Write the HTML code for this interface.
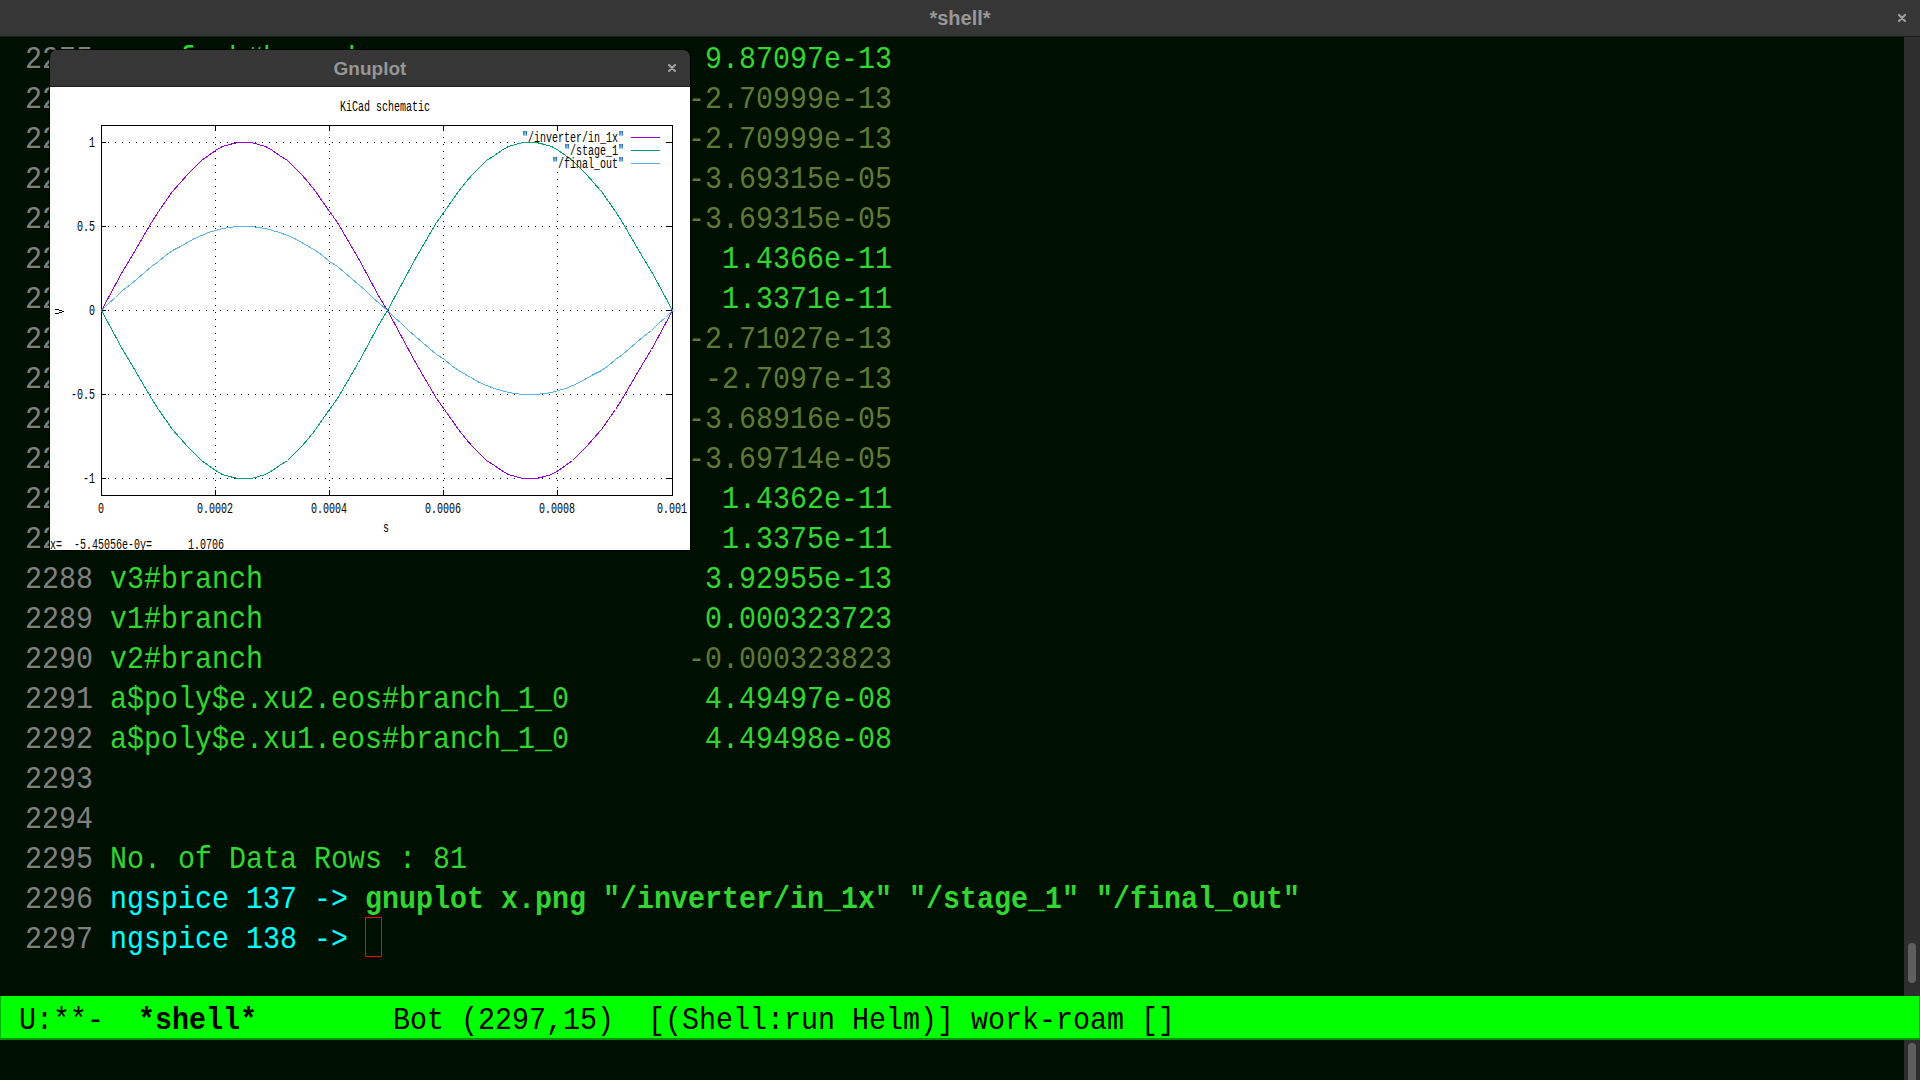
<!DOCTYPE html>
<html><head><meta charset="utf-8"><style>
html,body{margin:0;padding:0;}
body{width:1920px;height:1080px;overflow:hidden;background:#001000;position:relative;font-family:"Liberation Mono",monospace;}
.ln{position:absolute;left:25px;height:40px;line-height:40px;font-size:28.33px;white-space:pre;transform-origin:0 27px;transform:translateY(1px) scaleY(1.1);}
.ln b{font-weight:bold;}
#titlebar{position:absolute;left:0;top:0;width:1920px;height:37px;background:#363636;border-bottom:1px solid #1c1c1c;box-sizing:border-box;}
#titlebar .t{position:absolute;left:0;width:1920px;top:0;height:36px;line-height:36px;text-align:center;font-family:"Liberation Sans",sans-serif;font-weight:bold;font-size:20px;color:#979797;}
.x{position:absolute;}
#sb{position:absolute;left:1904px;top:37px;width:16px;height:1043px;background:#2e2e2e;}
.thumb{position:absolute;left:1908px;width:8px;border-radius:4px;background:#5f5f5f;}
#ml{position:absolute;left:0;top:996px;width:1920px;height:44px;background:#00ff00;border-left:1px solid #00b000;border-right:1px solid #009000;border-bottom:2px solid #009000;box-sizing:border-box;}
#ml .mt{position:absolute;left:18px;top:5px;height:42px;line-height:42px;font-size:28.33px;white-space:pre;color:#000;transform-origin:0 28px;transform:translateY(0px) scaleY(1.1);}
#gp{position:absolute;left:50px;top:50px;width:640px;height:500px;border-radius:7px 7px 0 0;box-shadow:0 0 0 1px rgba(0,0,0,0.85);}
#gptb{position:absolute;left:50px;top:50px;width:640px;height:37px;background:#363636;border-radius:7px 7px 0 0;border-bottom:1px solid #1c1c1c;box-sizing:border-box;}
#gptb .t{position:absolute;left:0;width:640px;top:1px;height:36px;line-height:36px;text-align:center;font-family:"Liberation Sans",sans-serif;font-weight:bold;font-size:19px;color:#969696;}
.gt{position:absolute;font-family:"Liberation Mono",monospace;font-size:10px;line-height:11px;height:11px;white-space:pre;color:#000;transform-origin:0 9px;transform:translateY(3px) scaleY(1.45);}
#cursor{position:absolute;left:365px;top:917px;width:17px;height:40px;border:1px solid #ff0000;box-sizing:border-box;}
</style></head><body>
<div class="ln" style="top:40px"><span style="color:#808080">2275</span> <span style="color:#33d433">mos.fueb#branch</span></div><div class="ln" style="top:40px;left:705px;color:#33d433">9.87097e-13</div><div class="ln" style="top:80px"><span style="color:#808080">2276</span> </div><div class="ln" style="top:80px;left:688px;color:#5e7936">-2.70999e-13</div><div class="ln" style="top:120px"><span style="color:#808080">2277</span> </div><div class="ln" style="top:120px;left:688px;color:#5e7936">-2.70999e-13</div><div class="ln" style="top:160px"><span style="color:#808080">2278</span> </div><div class="ln" style="top:160px;left:688px;color:#5e7936">-3.69315e-05</div><div class="ln" style="top:200px"><span style="color:#808080">2279</span> </div><div class="ln" style="top:200px;left:688px;color:#5e7936">-3.69315e-05</div><div class="ln" style="top:240px"><span style="color:#808080">2280</span> </div><div class="ln" style="top:240px;left:722px;color:#33d433">1.4366e-11</div><div class="ln" style="top:280px"><span style="color:#808080">2281</span> </div><div class="ln" style="top:280px;left:722px;color:#33d433">1.3371e-11</div><div class="ln" style="top:320px"><span style="color:#808080">2282</span> </div><div class="ln" style="top:320px;left:688px;color:#5e7936">-2.71027e-13</div><div class="ln" style="top:360px"><span style="color:#808080">2283</span> </div><div class="ln" style="top:360px;left:705px;color:#5e7936">-2.7097e-13</div><div class="ln" style="top:400px"><span style="color:#808080">2284</span> </div><div class="ln" style="top:400px;left:688px;color:#5e7936">-3.68916e-05</div><div class="ln" style="top:440px"><span style="color:#808080">2285</span> </div><div class="ln" style="top:440px;left:688px;color:#5e7936">-3.69714e-05</div><div class="ln" style="top:480px"><span style="color:#808080">2286</span> </div><div class="ln" style="top:480px;left:722px;color:#33d433">1.4362e-11</div><div class="ln" style="top:520px"><span style="color:#808080">2287</span> </div><div class="ln" style="top:520px;left:722px;color:#33d433">1.3375e-11</div><div class="ln" style="top:560px"><span style="color:#808080">2288</span> <span style="color:#33d433">v3#branch</span></div><div class="ln" style="top:560px;left:705px;color:#33d433">3.92955e-13</div><div class="ln" style="top:600px"><span style="color:#808080">2289</span> <span style="color:#33d433">v1#branch</span></div><div class="ln" style="top:600px;left:705px;color:#33d433">0.000323723</div><div class="ln" style="top:640px"><span style="color:#808080">2290</span> <span style="color:#33d433">v2#branch</span></div><div class="ln" style="top:640px;left:688px;color:#5e7936">-0.000323823</div><div class="ln" style="top:680px"><span style="color:#808080">2291</span> <span style="color:#33d433">a$poly$e.xu2.eos#branch_1_0</span></div><div class="ln" style="top:680px;left:705px;color:#33d433">4.49497e-08</div><div class="ln" style="top:720px"><span style="color:#808080">2292</span> <span style="color:#33d433">a$poly$e.xu1.eos#branch_1_0</span></div><div class="ln" style="top:720px;left:705px;color:#33d433">4.49498e-08</div><div class="ln" style="top:760px"><span style="color:#808080">2293</span> </div><div class="ln" style="top:800px"><span style="color:#808080">2294</span> </div><div class="ln" style="top:840px"><span style="color:#808080">2295</span> <span style="color:#33d433">No. of Data Rows : 81</span></div><div class="ln" style="top:880px"><span style="color:#808080">2296</span> <span style="color:#00ffff">ngspice 137 -&gt; </span><span style="color:#33d433"><b>gnuplot x.png &quot;/inverter/in_1x&quot; &quot;/stage_1&quot; &quot;/final_out&quot;</b></span></div><div class="ln" style="top:920px"><span style="color:#808080">2297</span> <span style="color:#00ffff">ngspice 138 -&gt; </span></div>
<div id="cursor"></div>
<div id="titlebar"><div class="t">*shell*</div>
<svg class="x" style="left:1896px;top:12px" width="12" height="12" viewBox="0 0 12 12"><path d="M3,3L9,9M9,3L3,9" stroke="#a0a0a0" stroke-width="2.2" stroke-linecap="round"/></svg>
</div>
<div id="sb"></div>
<div class="thumb" style="top:943px;height:40px"></div>
<div class="thumb" style="top:1043px;height:60px"></div>
<div id="ml"><div class="mt">U:**-  <b>*shell*</b>        Bot (2297,15)  [(Shell:run Helm)] work-roam []</div></div>
<div id="gp"></div>
<div id="gptb"><div class="t">Gnuplot</div>
<svg class="x" style="left:616px;top:12px" width="12" height="12" viewBox="0 0 12 12"><path d="M3,3L9,9M9,3L3,9" stroke="#a0a0a0" stroke-width="2.2" stroke-linecap="round"/></svg>
</div>
<svg width="640" height="463" viewBox="50 87 640 463" style="position:absolute;left:50px;top:87px" shape-rendering="crispEdges">
<rect x="50" y="87" width="640" height="463" fill="#fff"/>
<path d="M108,142h1v1h-1zM115,142h1v1h-1zM122,142h1v1h-1zM129,142h1v1h-1zM136,142h1v1h-1zM143,142h1v1h-1zM150,142h1v1h-1zM157,142h1v1h-1zM164,142h1v1h-1zM171,142h1v1h-1zM178,142h1v1h-1zM185,142h1v1h-1zM192,142h1v1h-1zM199,142h1v1h-1zM206,142h1v1h-1zM213,142h1v1h-1zM220,142h1v1h-1zM227,142h1v1h-1zM234,142h1v1h-1zM241,142h1v1h-1zM248,142h1v1h-1zM255,142h1v1h-1zM262,142h1v1h-1zM269,142h1v1h-1zM276,142h1v1h-1zM283,142h1v1h-1zM290,142h1v1h-1zM297,142h1v1h-1zM304,142h1v1h-1zM311,142h1v1h-1zM318,142h1v1h-1zM325,142h1v1h-1zM332,142h1v1h-1zM339,142h1v1h-1zM346,142h1v1h-1zM353,142h1v1h-1zM360,142h1v1h-1zM367,142h1v1h-1zM374,142h1v1h-1zM381,142h1v1h-1zM388,142h1v1h-1zM395,142h1v1h-1zM402,142h1v1h-1zM409,142h1v1h-1zM416,142h1v1h-1zM423,142h1v1h-1zM430,142h1v1h-1zM437,142h1v1h-1zM444,142h1v1h-1zM451,142h1v1h-1zM458,142h1v1h-1zM465,142h1v1h-1zM472,142h1v1h-1zM479,142h1v1h-1zM486,142h1v1h-1zM493,142h1v1h-1zM500,142h1v1h-1zM507,142h1v1h-1zM514,142h1v1h-1zM521,142h1v1h-1zM528,142h1v1h-1zM535,142h1v1h-1zM542,142h1v1h-1zM549,142h1v1h-1zM556,142h1v1h-1zM563,142h1v1h-1zM570,142h1v1h-1zM577,142h1v1h-1zM584,142h1v1h-1zM591,142h1v1h-1zM598,142h1v1h-1zM605,142h1v1h-1zM612,142h1v1h-1zM619,142h1v1h-1zM626,142h1v1h-1zM633,142h1v1h-1zM640,142h1v1h-1zM647,142h1v1h-1zM654,142h1v1h-1zM661,142h1v1h-1zM108,226h1v1h-1zM115,226h1v1h-1zM122,226h1v1h-1zM129,226h1v1h-1zM136,226h1v1h-1zM143,226h1v1h-1zM150,226h1v1h-1zM157,226h1v1h-1zM164,226h1v1h-1zM171,226h1v1h-1zM178,226h1v1h-1zM185,226h1v1h-1zM192,226h1v1h-1zM199,226h1v1h-1zM206,226h1v1h-1zM213,226h1v1h-1zM220,226h1v1h-1zM227,226h1v1h-1zM234,226h1v1h-1zM241,226h1v1h-1zM248,226h1v1h-1zM255,226h1v1h-1zM262,226h1v1h-1zM269,226h1v1h-1zM276,226h1v1h-1zM283,226h1v1h-1zM290,226h1v1h-1zM297,226h1v1h-1zM304,226h1v1h-1zM311,226h1v1h-1zM318,226h1v1h-1zM325,226h1v1h-1zM332,226h1v1h-1zM339,226h1v1h-1zM346,226h1v1h-1zM353,226h1v1h-1zM360,226h1v1h-1zM367,226h1v1h-1zM374,226h1v1h-1zM381,226h1v1h-1zM388,226h1v1h-1zM395,226h1v1h-1zM402,226h1v1h-1zM409,226h1v1h-1zM416,226h1v1h-1zM423,226h1v1h-1zM430,226h1v1h-1zM437,226h1v1h-1zM444,226h1v1h-1zM451,226h1v1h-1zM458,226h1v1h-1zM465,226h1v1h-1zM472,226h1v1h-1zM479,226h1v1h-1zM486,226h1v1h-1zM493,226h1v1h-1zM500,226h1v1h-1zM507,226h1v1h-1zM514,226h1v1h-1zM521,226h1v1h-1zM528,226h1v1h-1zM535,226h1v1h-1zM542,226h1v1h-1zM549,226h1v1h-1zM556,226h1v1h-1zM563,226h1v1h-1zM570,226h1v1h-1zM577,226h1v1h-1zM584,226h1v1h-1zM591,226h1v1h-1zM598,226h1v1h-1zM605,226h1v1h-1zM612,226h1v1h-1zM619,226h1v1h-1zM626,226h1v1h-1zM633,226h1v1h-1zM640,226h1v1h-1zM647,226h1v1h-1zM654,226h1v1h-1zM661,226h1v1h-1zM108,310h1v1h-1zM115,310h1v1h-1zM122,310h1v1h-1zM129,310h1v1h-1zM136,310h1v1h-1zM143,310h1v1h-1zM150,310h1v1h-1zM157,310h1v1h-1zM164,310h1v1h-1zM171,310h1v1h-1zM178,310h1v1h-1zM185,310h1v1h-1zM192,310h1v1h-1zM199,310h1v1h-1zM206,310h1v1h-1zM213,310h1v1h-1zM220,310h1v1h-1zM227,310h1v1h-1zM234,310h1v1h-1zM241,310h1v1h-1zM248,310h1v1h-1zM255,310h1v1h-1zM262,310h1v1h-1zM269,310h1v1h-1zM276,310h1v1h-1zM283,310h1v1h-1zM290,310h1v1h-1zM297,310h1v1h-1zM304,310h1v1h-1zM311,310h1v1h-1zM318,310h1v1h-1zM325,310h1v1h-1zM332,310h1v1h-1zM339,310h1v1h-1zM346,310h1v1h-1zM353,310h1v1h-1zM360,310h1v1h-1zM367,310h1v1h-1zM374,310h1v1h-1zM381,310h1v1h-1zM388,310h1v1h-1zM395,310h1v1h-1zM402,310h1v1h-1zM409,310h1v1h-1zM416,310h1v1h-1zM423,310h1v1h-1zM430,310h1v1h-1zM437,310h1v1h-1zM444,310h1v1h-1zM451,310h1v1h-1zM458,310h1v1h-1zM465,310h1v1h-1zM472,310h1v1h-1zM479,310h1v1h-1zM486,310h1v1h-1zM493,310h1v1h-1zM500,310h1v1h-1zM507,310h1v1h-1zM514,310h1v1h-1zM521,310h1v1h-1zM528,310h1v1h-1zM535,310h1v1h-1zM542,310h1v1h-1zM549,310h1v1h-1zM556,310h1v1h-1zM563,310h1v1h-1zM570,310h1v1h-1zM577,310h1v1h-1zM584,310h1v1h-1zM591,310h1v1h-1zM598,310h1v1h-1zM605,310h1v1h-1zM612,310h1v1h-1zM619,310h1v1h-1zM626,310h1v1h-1zM633,310h1v1h-1zM640,310h1v1h-1zM647,310h1v1h-1zM654,310h1v1h-1zM661,310h1v1h-1zM108,394h1v1h-1zM115,394h1v1h-1zM122,394h1v1h-1zM129,394h1v1h-1zM136,394h1v1h-1zM143,394h1v1h-1zM150,394h1v1h-1zM157,394h1v1h-1zM164,394h1v1h-1zM171,394h1v1h-1zM178,394h1v1h-1zM185,394h1v1h-1zM192,394h1v1h-1zM199,394h1v1h-1zM206,394h1v1h-1zM213,394h1v1h-1zM220,394h1v1h-1zM227,394h1v1h-1zM234,394h1v1h-1zM241,394h1v1h-1zM248,394h1v1h-1zM255,394h1v1h-1zM262,394h1v1h-1zM269,394h1v1h-1zM276,394h1v1h-1zM283,394h1v1h-1zM290,394h1v1h-1zM297,394h1v1h-1zM304,394h1v1h-1zM311,394h1v1h-1zM318,394h1v1h-1zM325,394h1v1h-1zM332,394h1v1h-1zM339,394h1v1h-1zM346,394h1v1h-1zM353,394h1v1h-1zM360,394h1v1h-1zM367,394h1v1h-1zM374,394h1v1h-1zM381,394h1v1h-1zM388,394h1v1h-1zM395,394h1v1h-1zM402,394h1v1h-1zM409,394h1v1h-1zM416,394h1v1h-1zM423,394h1v1h-1zM430,394h1v1h-1zM437,394h1v1h-1zM444,394h1v1h-1zM451,394h1v1h-1zM458,394h1v1h-1zM465,394h1v1h-1zM472,394h1v1h-1zM479,394h1v1h-1zM486,394h1v1h-1zM493,394h1v1h-1zM500,394h1v1h-1zM507,394h1v1h-1zM514,394h1v1h-1zM521,394h1v1h-1zM528,394h1v1h-1zM535,394h1v1h-1zM542,394h1v1h-1zM549,394h1v1h-1zM556,394h1v1h-1zM563,394h1v1h-1zM570,394h1v1h-1zM577,394h1v1h-1zM584,394h1v1h-1zM591,394h1v1h-1zM598,394h1v1h-1zM605,394h1v1h-1zM612,394h1v1h-1zM619,394h1v1h-1zM626,394h1v1h-1zM633,394h1v1h-1zM640,394h1v1h-1zM647,394h1v1h-1zM654,394h1v1h-1zM661,394h1v1h-1zM108,478h1v1h-1zM115,478h1v1h-1zM122,478h1v1h-1zM129,478h1v1h-1zM136,478h1v1h-1zM143,478h1v1h-1zM150,478h1v1h-1zM157,478h1v1h-1zM164,478h1v1h-1zM171,478h1v1h-1zM178,478h1v1h-1zM185,478h1v1h-1zM192,478h1v1h-1zM199,478h1v1h-1zM206,478h1v1h-1zM213,478h1v1h-1zM220,478h1v1h-1zM227,478h1v1h-1zM234,478h1v1h-1zM241,478h1v1h-1zM248,478h1v1h-1zM255,478h1v1h-1zM262,478h1v1h-1zM269,478h1v1h-1zM276,478h1v1h-1zM283,478h1v1h-1zM290,478h1v1h-1zM297,478h1v1h-1zM304,478h1v1h-1zM311,478h1v1h-1zM318,478h1v1h-1zM325,478h1v1h-1zM332,478h1v1h-1zM339,478h1v1h-1zM346,478h1v1h-1zM353,478h1v1h-1zM360,478h1v1h-1zM367,478h1v1h-1zM374,478h1v1h-1zM381,478h1v1h-1zM388,478h1v1h-1zM395,478h1v1h-1zM402,478h1v1h-1zM409,478h1v1h-1zM416,478h1v1h-1zM423,478h1v1h-1zM430,478h1v1h-1zM437,478h1v1h-1zM444,478h1v1h-1zM451,478h1v1h-1zM458,478h1v1h-1zM465,478h1v1h-1zM472,478h1v1h-1zM479,478h1v1h-1zM486,478h1v1h-1zM493,478h1v1h-1zM500,478h1v1h-1zM507,478h1v1h-1zM514,478h1v1h-1zM521,478h1v1h-1zM528,478h1v1h-1zM535,478h1v1h-1zM542,478h1v1h-1zM549,478h1v1h-1zM556,478h1v1h-1zM563,478h1v1h-1zM570,478h1v1h-1zM577,478h1v1h-1zM584,478h1v1h-1zM591,478h1v1h-1zM598,478h1v1h-1zM605,478h1v1h-1zM612,478h1v1h-1zM619,478h1v1h-1zM626,478h1v1h-1zM633,478h1v1h-1zM640,478h1v1h-1zM647,478h1v1h-1zM654,478h1v1h-1zM661,478h1v1h-1zM215,487h1v1h-1zM215,480h1v1h-1zM215,473h1v1h-1zM215,466h1v1h-1zM215,459h1v1h-1zM215,452h1v1h-1zM215,445h1v1h-1zM215,438h1v1h-1zM215,431h1v1h-1zM215,424h1v1h-1zM215,417h1v1h-1zM215,410h1v1h-1zM215,403h1v1h-1zM215,396h1v1h-1zM215,389h1v1h-1zM215,382h1v1h-1zM215,375h1v1h-1zM215,368h1v1h-1zM215,361h1v1h-1zM215,354h1v1h-1zM215,347h1v1h-1zM215,340h1v1h-1zM215,333h1v1h-1zM215,326h1v1h-1zM215,319h1v1h-1zM215,312h1v1h-1zM215,305h1v1h-1zM215,298h1v1h-1zM215,291h1v1h-1zM215,284h1v1h-1zM215,277h1v1h-1zM215,270h1v1h-1zM215,263h1v1h-1zM215,256h1v1h-1zM215,249h1v1h-1zM215,242h1v1h-1zM215,235h1v1h-1zM215,228h1v1h-1zM215,221h1v1h-1zM215,214h1v1h-1zM215,207h1v1h-1zM215,200h1v1h-1zM215,193h1v1h-1zM215,186h1v1h-1zM215,179h1v1h-1zM215,172h1v1h-1zM215,165h1v1h-1zM215,158h1v1h-1zM215,151h1v1h-1zM215,144h1v1h-1zM215,137h1v1h-1zM215,130h1v1h-1zM329,487h1v1h-1zM329,480h1v1h-1zM329,473h1v1h-1zM329,466h1v1h-1zM329,459h1v1h-1zM329,452h1v1h-1zM329,445h1v1h-1zM329,438h1v1h-1zM329,431h1v1h-1zM329,424h1v1h-1zM329,417h1v1h-1zM329,410h1v1h-1zM329,403h1v1h-1zM329,396h1v1h-1zM329,389h1v1h-1zM329,382h1v1h-1zM329,375h1v1h-1zM329,368h1v1h-1zM329,361h1v1h-1zM329,354h1v1h-1zM329,347h1v1h-1zM329,340h1v1h-1zM329,333h1v1h-1zM329,326h1v1h-1zM329,319h1v1h-1zM329,312h1v1h-1zM329,305h1v1h-1zM329,298h1v1h-1zM329,291h1v1h-1zM329,284h1v1h-1zM329,277h1v1h-1zM329,270h1v1h-1zM329,263h1v1h-1zM329,256h1v1h-1zM329,249h1v1h-1zM329,242h1v1h-1zM329,235h1v1h-1zM329,228h1v1h-1zM329,221h1v1h-1zM329,214h1v1h-1zM329,207h1v1h-1zM329,200h1v1h-1zM329,193h1v1h-1zM329,186h1v1h-1zM329,179h1v1h-1zM329,172h1v1h-1zM329,165h1v1h-1zM329,158h1v1h-1zM329,151h1v1h-1zM329,144h1v1h-1zM329,137h1v1h-1zM329,130h1v1h-1zM443,487h1v1h-1zM443,480h1v1h-1zM443,473h1v1h-1zM443,466h1v1h-1zM443,459h1v1h-1zM443,452h1v1h-1zM443,445h1v1h-1zM443,438h1v1h-1zM443,431h1v1h-1zM443,424h1v1h-1zM443,417h1v1h-1zM443,410h1v1h-1zM443,403h1v1h-1zM443,396h1v1h-1zM443,389h1v1h-1zM443,382h1v1h-1zM443,375h1v1h-1zM443,368h1v1h-1zM443,361h1v1h-1zM443,354h1v1h-1zM443,347h1v1h-1zM443,340h1v1h-1zM443,333h1v1h-1zM443,326h1v1h-1zM443,319h1v1h-1zM443,312h1v1h-1zM443,305h1v1h-1zM443,298h1v1h-1zM443,291h1v1h-1zM443,284h1v1h-1zM443,277h1v1h-1zM443,270h1v1h-1zM443,263h1v1h-1zM443,256h1v1h-1zM443,249h1v1h-1zM443,242h1v1h-1zM443,235h1v1h-1zM443,228h1v1h-1zM443,221h1v1h-1zM443,214h1v1h-1zM443,207h1v1h-1zM443,200h1v1h-1zM443,193h1v1h-1zM443,186h1v1h-1zM443,179h1v1h-1zM443,172h1v1h-1zM443,165h1v1h-1zM443,158h1v1h-1zM443,151h1v1h-1zM443,144h1v1h-1zM443,137h1v1h-1zM443,130h1v1h-1zM557,487h1v1h-1zM557,480h1v1h-1zM557,473h1v1h-1zM557,466h1v1h-1zM557,459h1v1h-1zM557,452h1v1h-1zM557,445h1v1h-1zM557,438h1v1h-1zM557,431h1v1h-1zM557,424h1v1h-1zM557,417h1v1h-1zM557,410h1v1h-1zM557,403h1v1h-1zM557,396h1v1h-1zM557,389h1v1h-1zM557,382h1v1h-1zM557,375h1v1h-1zM557,368h1v1h-1zM557,361h1v1h-1zM557,354h1v1h-1zM557,347h1v1h-1zM557,340h1v1h-1zM557,333h1v1h-1zM557,326h1v1h-1zM557,319h1v1h-1zM557,312h1v1h-1zM557,305h1v1h-1zM557,298h1v1h-1zM557,291h1v1h-1zM557,284h1v1h-1zM557,277h1v1h-1zM557,270h1v1h-1zM557,263h1v1h-1zM557,256h1v1h-1zM557,249h1v1h-1zM557,242h1v1h-1zM557,235h1v1h-1zM557,228h1v1h-1zM557,221h1v1h-1zM557,214h1v1h-1zM557,207h1v1h-1zM557,200h1v1h-1zM557,193h1v1h-1zM557,186h1v1h-1zM557,179h1v1h-1zM557,172h1v1h-1zM557,165h1v1h-1zM557,158h1v1h-1zM557,151h1v1h-1zM557,144h1v1h-1zM557,137h1v1h-1zM557,130h1v1h-1z" fill="#000"/>
<rect x="523" y="126" width="149" height="43" fill="#fff"/>
<path d="M101,125h572v1h-572zM101,495h572v1h-572zM101,125h1v371h-1zM672,125h1v371h-1zM101,126h1v5h-1zM101,490h1v5h-1zM215,126h1v5h-1zM215,490h1v5h-1zM329,126h1v5h-1zM329,490h1v5h-1zM443,126h1v5h-1zM443,490h1v5h-1zM557,126h1v5h-1zM557,490h1v5h-1zM672,126h1v5h-1zM672,490h1v5h-1zM102,142h4v1h-4zM666,142h6v1h-6zM102,226h4v1h-4zM666,226h6v1h-6zM102,310h4v1h-4zM666,310h6v1h-6zM102,394h4v1h-4zM666,394h6v1h-6zM102,478h4v1h-4zM666,478h6v1h-6z" fill="#000"/>
<polyline points="101.5,310.5 108.5,297.5 115.5,284.5 122.5,271.5 130.5,258.5 137.5,246.5 144.5,234.5 151.5,222.5 158.5,211.5 165.5,201.5 172.5,191.5 180.5,182.5 187.5,174.5 194.5,167.5 201.5,160.5 208.5,155.5 215.5,150.5 222.5,146.5 229.5,144.5 237.5,142.5 244.5,142.5 251.5,142.5 258.5,144.5 265.5,146.5 272.5,150.5 279.5,155.5 287.5,160.5 294.5,167.5 301.5,174.5 308.5,182.5 315.5,191.5 322.5,201.5 329.5,211.5 337.5,222.5 344.5,234.5 351.5,246.5 358.5,258.5 365.5,271.5 372.5,284.5 379.5,297.5 387.5,310.5 394.5,323.5 401.5,336.5 408.5,349.5 415.5,362.5 422.5,374.5 429.5,386.5 436.5,398.5 444.5,409.5 451.5,419.5 458.5,429.5 465.5,438.5 472.5,446.5 479.5,453.5 486.5,460.5 494.5,465.5 501.5,470.5 508.5,474.5 515.5,476.5 522.5,478.5 529.5,478.5 536.5,478.5 544.5,476.5 551.5,474.5 558.5,470.5 565.5,465.5 572.5,460.5 579.5,453.5 586.5,446.5 593.5,438.5 601.5,429.5 608.5,419.5 615.5,409.5 622.5,398.5 629.5,386.5 636.5,374.5 643.5,362.5 651.5,349.5 658.5,336.5 665.5,323.5 672.5,310.5" fill="none" stroke="#9400d3" stroke-width="1"/>
<polyline points="101.5,310.5 108.5,323.5 115.5,336.5 122.5,349.5 130.5,362.5 137.5,374.5 144.5,386.5 151.5,398.5 158.5,409.5 165.5,419.5 172.5,429.5 180.5,438.5 187.5,446.5 194.5,453.5 201.5,460.5 208.5,465.5 215.5,470.5 222.5,474.5 229.5,476.5 237.5,478.5 244.5,478.5 251.5,478.5 258.5,476.5 265.5,474.5 272.5,470.5 279.5,465.5 287.5,460.5 294.5,453.5 301.5,446.5 308.5,438.5 315.5,429.5 322.5,419.5 329.5,409.5 337.5,398.5 344.5,386.5 351.5,374.5 358.5,362.5 365.5,349.5 372.5,336.5 379.5,323.5 387.5,310.5 394.5,297.5 401.5,284.5 408.5,271.5 415.5,258.5 422.5,246.5 429.5,234.5 436.5,222.5 444.5,211.5 451.5,201.5 458.5,191.5 465.5,182.5 472.5,174.5 479.5,167.5 486.5,160.5 494.5,155.5 501.5,150.5 508.5,146.5 515.5,144.5 522.5,142.5 529.5,142.5 536.5,142.5 544.5,144.5 551.5,146.5 558.5,150.5 565.5,155.5 572.5,160.5 579.5,167.5 586.5,174.5 593.5,182.5 601.5,191.5 608.5,201.5 615.5,211.5 622.5,222.5 629.5,234.5 636.5,246.5 643.5,258.5 651.5,271.5 658.5,284.5 665.5,297.5 672.5,310.5" fill="none" stroke="#009e73" stroke-width="1"/>
<polyline points="101.5,310.5 108.5,303.5 115.5,297.5 122.5,290.5 130.5,284.5 137.5,278.5 144.5,272.5 151.5,266.5 158.5,261.5 165.5,255.5 172.5,250.5 180.5,246.5 187.5,242.5 194.5,238.5 201.5,235.5 208.5,232.5 215.5,230.5 222.5,228.5 229.5,227.5 237.5,226.5 244.5,226.5 251.5,226.5 258.5,227.5 265.5,228.5 272.5,230.5 279.5,232.5 287.5,235.5 294.5,238.5 301.5,242.5 308.5,246.5 315.5,250.5 322.5,255.5 329.5,261.5 337.5,266.5 344.5,272.5 351.5,278.5 358.5,284.5 365.5,290.5 372.5,297.5 379.5,303.5 387.5,310.5 394.5,317.5 401.5,323.5 408.5,330.5 415.5,336.5 422.5,342.5 429.5,348.5 436.5,354.5 444.5,359.5 451.5,365.5 458.5,370.5 465.5,374.5 472.5,378.5 479.5,382.5 486.5,385.5 494.5,388.5 501.5,390.5 508.5,392.5 515.5,393.5 522.5,394.5 529.5,394.5 536.5,394.5 544.5,393.5 551.5,392.5 558.5,390.5 565.5,388.5 572.5,385.5 579.5,382.5 586.5,378.5 593.5,374.5 601.5,370.5 608.5,365.5 615.5,359.5 622.5,354.5 629.5,348.5 636.5,342.5 643.5,336.5 651.5,330.5 658.5,323.5 665.5,317.5 672.5,310.5" fill="none" stroke="#56b4e9" stroke-width="1"/>
<path d="M55,309h4v1h-4zM59,310h3v1h-3zM62,311h2v1h-2zM59,312h3v1h-3zM55,313h4v1h-4z" fill="#000"/>
<path d="M631,137h29v1h-29z" fill="#9400d3"/>
<path d="M631,150h29v1h-29z" fill="#009e73"/>
<path d="M631,163h29v1h-29z" fill="#56b4e9"/>
</svg>
<div class="gt" style="left:235px;top:100px;width:300px;text-align:center">KiCad schematic</div><div class="gt" style="left:-205px;top:136px;width:300px;text-align:right">1</div><div class="gt" style="left:-205px;top:220px;width:300px;text-align:right">0.5</div><div class="gt" style="left:-205px;top:304px;width:300px;text-align:right">0</div><div class="gt" style="left:-205px;top:388px;width:300px;text-align:right">-0.5</div><div class="gt" style="left:-205px;top:472px;width:300px;text-align:right">-1</div><div class="gt" style="left:-49px;top:502px;width:300px;text-align:center">0</div><div class="gt" style="left:65px;top:502px;width:300px;text-align:center">0.0002</div><div class="gt" style="left:179px;top:502px;width:300px;text-align:center">0.0004</div><div class="gt" style="left:293px;top:502px;width:300px;text-align:center">0.0006</div><div class="gt" style="left:407px;top:502px;width:300px;text-align:center">0.0008</div><div class="gt" style="left:522px;top:502px;width:300px;text-align:center">0.001</div><div class="gt" style="left:236px;top:521px;width:300px;text-align:center">s</div><div class="gt" style="left:324px;top:131px;width:300px;text-align:right">&quot;/inverter/in_1x&quot;</div><div class="gt" style="left:324px;top:144px;width:300px;text-align:right">&quot;/stage_1&quot;</div><div class="gt" style="left:324px;top:157px;width:300px;text-align:right">&quot;/final_out&quot;</div><div class="gt" style="left:50px;top:538px">x=  -5.45056e-0y=      1.0706</div>
</body></html>
